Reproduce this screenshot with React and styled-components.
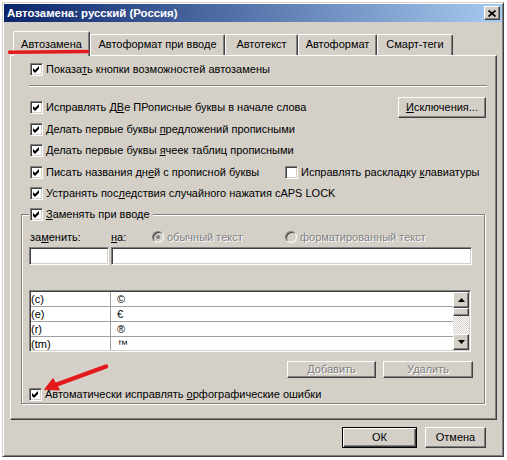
import React from 'react';
import styled, { createGlobalStyle, css } from 'styled-components';

const GlobalStyle = createGlobalStyle`
  html, body {
    margin: 0;
    padding: 0;
    background: #ffffff;
  }
  body {
    font-family: "Liberation Sans", Arial, sans-serif;
    font-size: 11px;
    line-height: 13px;
    color: #000;
  }
  u {
    text-decoration-thickness: 1px;
    text-underline-offset: 1px;
  }
`;

const raised = css`
  background: #d4d0c8;
  border: 1px solid;
  border-color: #ffffff #404040 #404040 #ffffff;
  box-shadow: inset -1px -1px #808080;
`;

const sunken = css`
  background: #ffffff;
  border: 1px solid;
  border-color: #808080 #ffffff #ffffff #808080;
  box-shadow: inset 1px 1px #404040, inset -1px -1px #d4d0c8;
`;

const Window = styled.div`
  position: relative;
  box-sizing: border-box;
  width: 502px;
  height: 455px;
  margin: 2px 0 0 2px;
  padding: 1px;
  display: flex;
  flex-direction: column;
  background: #d4d0c8;
  border: 1px solid;
  border-color: #d4d0c8 #404040 #404040 #d4d0c8;
  box-shadow: inset 1px 1px #ffffff, inset -1px -1px #808080;
`;

const TitleBar = styled.div`
  height: 18px;
  flex-shrink: 0;
  display: flex;
  align-items: center;
  justify-content: space-between;
  padding: 0 2px 0 3px;
  background: linear-gradient(to right, #0a246a, #a6caf0);
  color: #ffffff;
  font-size: 11.4px;
  font-weight: bold;
  white-space: nowrap;
`;

const CloseButton = styled.div`
  ${raised};
  box-sizing: border-box;
  width: 16px;
  height: 14px;
  display: flex;
  align-items: center;
  justify-content: center;
`;

const TabStrip = styled.div`
  position: relative;
  z-index: 1;
  flex-shrink: 0;
  display: flex;
  align-items: flex-end;
  height: 24px;
  margin-top: 9px;
  padding-left: 9px;
`;

const Tab = styled.div`
  box-sizing: border-box;
  width: ${(p) => p.$w}px;
  height: ${(p) => (p.$active ? 25 : 21)}px;
  margin-bottom: ${(p) => (p.$active ? -1 : 0)}px;
  padding-top: ${(p) => (p.$active ? 6 : 3)}px;
  text-align: center;
  white-space: nowrap;
  background: #d4d0c8;
  border-top: 1px solid #ffffff;
  border-left: 1px solid #ffffff;
  border-right: 1px solid #404040;
  box-shadow: inset -1px 0 #808080;
  border-radius: 2px 2px 0 0;
`;

const Panel = styled.div`
  box-sizing: border-box;
  flex-shrink: 0;
  height: 365px;
  margin: 0 5px 0 6px;
  padding: 3px 11px 0 10px;
  display: flex;
  flex-direction: column;
  border: 1px solid;
  border-color: #ffffff #404040 #404040 #ffffff;
  box-shadow: inset -1px -1px #808080;
`;

const CheckRow = styled.div`
  display: flex;
  align-items: center;
  height: ${(p) => p.$h || 21.5}px;
  margin-top: ${(p) => p.$mt || 0}px;
  padding-left: ${(p) => (p.$pl === undefined ? 9 : p.$pl)}px;
  white-space: nowrap;
`;

const Cell = styled.div`
  display: flex;
  align-items: center;
  width: ${(p) => (p.$w ? `${p.$w}px` : 'auto')};
  flex: ${(p) => (p.$w ? '0 0 auto' : '1 1 auto')};
`;

const Label = styled.span`
  margin-left: 3px;
  white-space: nowrap;
  color: ${(p) => (p.$disabled ? '#808080' : '#000000')};
  text-shadow: ${(p) => (p.$disabled ? '1px 1px #ffffff' : 'none')};
`;

const Separator = styled.div`
  height: 0;
  margin: 4.5px -2px 0 8px;
  border-top: 1px solid #808080;
  border-bottom: 1px solid #ffffff;
`;

const Button = styled.div`
  ${raised};
  box-sizing: border-box;
  display: flex;
  align-items: center;
  justify-content: center;
  flex-shrink: 0;
  width: ${(p) => p.$w}px;
  height: ${(p) => p.$h || 21}px;
  margin-right: ${(p) => p.$mr || 0}px;
  color: ${(p) => (p.$disabled ? '#808080' : '#000000')};
  text-shadow: ${(p) => (p.$disabled ? '1px 1px #ffffff' : 'none')};
  white-space: nowrap;
  ${(p) =>
    p.$default &&
    css`
      border: 1px solid #000000;
      box-shadow: inset 1px 1px #ffffff, inset -1px -1px #404040, inset -2px -2px #808080;
    `}
`;

const CheckBoxFrame = styled.span`
  ${sunken};
  box-sizing: border-box;
  flex-shrink: 0;
  width: 13px;
  height: 13px;
  display: inline-flex;
  align-items: center;
  justify-content: center;
`;

const GroupBox = styled.div`
  display: flex;
  flex-direction: column;
  margin-top: 9.5px;
  padding: 0 12px 2px 7px;
  border: 1px solid #808080;
  box-shadow: inset 1px 1px #ffffff, 1px 1px #ffffff;
`;

const Legend = styled.div`
  align-self: flex-start;
  display: flex;
  align-items: center;
  height: 15px;
  margin-top: -8px;
  padding: 0 3px 0 1px;
  background: #d4d0c8;
  white-space: nowrap;
`;

const FieldLabels = styled.div`
  display: flex;
  align-items: center;
  height: 13px;
  margin-top: 8.5px;
  padding-left: 1px;
`;

const FieldLabel = styled.div`
  display: flex;
  align-items: center;
  width: ${(p) => (p.$w ? `${p.$w}px` : 'auto')};
  flex-shrink: 0;
  white-space: nowrap;
`;

const RadioCircle = styled.span`
  box-sizing: border-box;
  flex-shrink: 0;
  width: 12px;
  height: 12px;
  border-radius: 50%;
  border: 1px solid;
  border-color: #808080 #ffffff #ffffff #808080;
  box-shadow: inset 1px 1px #404040;
  background: #d4d0c8;
  display: inline-flex;
  align-items: center;
  justify-content: center;
`;

const RadioDot = styled.span`
  width: 4px;
  height: 4px;
  border-radius: 50%;
  background: #808080;
`;

const InputsRow = styled.div`
  display: flex;
  margin-top: 3.5px;
`;

const TextInput = styled.div`
  ${sunken};
  box-sizing: border-box;
  height: 18px;
  width: ${(p) => (p.$w ? `${p.$w}px` : 'auto')};
  flex: ${(p) => (p.$w ? '0 0 auto' : '1 1 auto')};
  margin-left: ${(p) => p.$ml || 0}px;
`;

const ListBox = styled.div`
  ${sunken};
  box-sizing: border-box;
  display: flex;
  height: 62px;
  margin: 25px 1px 0 0;
  padding: 1px;
  overflow: hidden;
`;

const ListRows = styled.div`
  flex: 1 1 auto;
  overflow: hidden;
`;

const ListRow = styled.div`
  box-sizing: border-box;
  display: grid;
  grid-template-columns: 80px 1fr;
  height: 15px;
  line-height: 14px;
  border-bottom: 1px solid #a0a0a0;
`;

const ListCell = styled.div`
  padding-left: ${(p) => p.$pl}px;
  border-right: ${(p) => (p.$divider ? '1px solid #a0a0a0' : 'none')};
  white-space: nowrap;
  overflow: hidden;
`;

const ScrollBar = styled.div`
  display: flex;
  flex-direction: column;
  width: 16px;
  flex-shrink: 0;
`;

const ScrollButton = styled.div`
  ${raised};
  box-sizing: border-box;
  height: ${(p) => p.$h}px;
  flex-shrink: 0;
  display: flex;
  align-items: center;
  justify-content: center;
`;

const ScrollTrack = styled.div`
  flex: 1 1 auto;
  background: repeating-conic-gradient(#d4d0c8 0 25%, #ffffff 0 50%) 0 0 / 2px 2px;
`;

const ButtonsRow = styled.div`
  display: flex;
  justify-content: flex-end;
  gap: 7px;
  margin: 9px -1px 0 0;
`;

const Footer = styled.div`
  display: flex;
  justify-content: flex-end;
  gap: 8px;
  margin-top: 7px;
  padding-right: 16px;
`;

const Annotation = styled.svg`
  position: absolute;
  left: ${(p) => p.$x}px;
  top: ${(p) => p.$y}px;
  z-index: 5;
  pointer-events: none;
  overflow: visible;
`;

const CheckBox = ({ checked }) => (
  <CheckBoxFrame>
    {checked && (
      <svg width="9" height="9" viewBox="0 0 9 9">
        <polygon points="1,3 3,5 7,1 7,4 3,8 1,6" fill="#000" />
      </svg>
    )}
  </CheckBoxFrame>
);

const Radio = ({ checked }) => (
  <RadioCircle>{checked && <RadioDot />}</RadioCircle>
);

const Arrow = ({ down }) => (
  <svg width="7" height="4" viewBox="0 0 7 4">
    <polygon points={down ? '0,0 7,0 3.5,4' : '0,4 7,4 3.5,0'} fill="#000" />
  </svg>
);

const tabs = [
  { label: 'Автозамена', w: 77 },
  { label: 'Автоформат при вводе', w: 135 },
  { label: 'Автотекст', w: 73 },
  { label: 'Автоформат', w: 79 },
  { label: 'Смарт-теги', w: 76 },
];

const entries = [
  ['(c)', '©'],
  ['(e)', '€'],
  ['(r)', '®'],
  ['(tm)', '™'],
];

const App = () => (
  <>
    <GlobalStyle />
    <Window>
      <TitleBar>
        <span>Автозамена: русский (Россия)</span>
        <CloseButton>
          <svg width="8" height="7" viewBox="0 0 8 7">
            <path d="M0.5 0.5 L7.5 6.5 M7.5 0.5 L0.5 6.5" stroke="#000" strokeWidth="1.7" />
          </svg>
        </CloseButton>
      </TitleBar>

      <TabStrip>
        {tabs.map((t, i) => (
          <Tab key={t.label} $w={t.w} $active={i === 0}>
            {t.label}
          </Tab>
        ))}
      </TabStrip>

      <Panel>
        <CheckRow>
          <CheckBox checked />
          <Label>
            Показа<u>т</u>ь кнопки возможностей автозамены
          </Label>
        </CheckRow>
        <Separator />

        <CheckRow $mt={10}>
          <Cell>
            <CheckBox checked />
            <Label>
              Исправлять Д<u>В</u>е ПРописные буквы в начале слова
            </Label>
          </Cell>
          <Button $w={88} $mr={-1}>
            <span>
              <u>И</u>сключения...
            </span>
          </Button>
        </CheckRow>
        <CheckRow>
          <CheckBox checked />
          <Label>
            Делать первые буквы <u>п</u>редложений прописными
          </Label>
        </CheckRow>
        <CheckRow>
          <CheckBox checked />
          <Label>
            Делать первые буквы <u>я</u>чеек таблиц прописными
          </Label>
        </CheckRow>
        <CheckRow>
          <Cell $w={255}>
            <CheckBox checked />
            <Label>
              Писать названия дн<u>е</u>й с прописной буквы
            </Label>
          </Cell>
          <Cell>
            <CheckBox />
            <Label>
              Исправлять раскладку <u>к</u>лавиатуры
            </Label>
          </Cell>
        </CheckRow>
        <CheckRow>
          <CheckBox checked />
          <Label>
            Устранять пос<u>л</u>едствия случайного нажатия cAPS LOCK
          </Label>
        </CheckRow>

        <GroupBox>
          <Legend>
            <CheckBox checked />
            <Label>
              <u>З</u>аменять при вводе
            </Label>
          </Legend>

          <FieldLabels>
            <FieldLabel $w={81}>
              <span>
                за<u>м</u>енить:
              </span>
            </FieldLabel>
            <FieldLabel $w={41}>
              <span>
                <u>н</u>а:
              </span>
            </FieldLabel>
            <FieldLabel $w={133}>
              <Radio checked />
              <Label $disabled>обычный текст</Label>
            </FieldLabel>
            <FieldLabel>
              <Radio />
              <Label $disabled>форматированный текст</Label>
            </FieldLabel>
          </FieldLabels>

          <InputsRow>
            <TextInput $w={80} />
            <TextInput $ml={2} />
          </InputsRow>

          <ListBox>
            <ListRows>
              {entries.map(([from, to]) => (
                <ListRow key={from}>
                  <ListCell $pl={0} $divider>
                    {from}
                  </ListCell>
                  <ListCell $pl={6}>{to}</ListCell>
                </ListRow>
              ))}
            </ListRows>
            <ScrollBar>
              <ScrollButton $h={16}>
                <Arrow />
              </ScrollButton>
              <ScrollButton $h={8} />
              <ScrollTrack />
              <ScrollButton $h={16}>
                <Arrow down />
              </ScrollButton>
            </ScrollBar>
          </ListBox>

          <ButtonsRow>
            <Button $w={89} $h={17} $disabled>
              Добавить
            </Button>
            <Button $w={90} $h={17} $disabled>
              Удалить
            </Button>
          </ButtonsRow>

          <CheckRow $h={13} $mt={10} $pl={0}>
            <CheckBox checked />
            <Label>
              Автоматически исправлять <u>о</u>рфографические ошибки
            </Label>
          </CheckRow>
        </GroupBox>
      </Panel>

      <Footer>
        <Button $w={75} $default>
          ОК
        </Button>
        <Button $w={61}>Отмена</Button>
      </Footer>

      <Annotation $x={4} $y={46} width="84" height="7" viewBox="7 49 84 7">
        <path d="M9.5 52.2 L87.5 51.6" stroke="#e3191c" strokeWidth="3.5" strokeLinecap="round" />
      </Annotation>
      <Annotation $x={31} $y={359} width="78" height="34" viewBox="34 362 78 34">
        <path d="M106 366.5 L54 385.5" stroke="#e3191c" strokeWidth="4.5" strokeLinecap="round" />
        <polygon points="44.5,389.5 53,378.5 59.5,390" fill="#e3191c" stroke="#e3191c" strokeWidth="1" strokeLinejoin="round" />
      </Annotation>
    </Window>
  </>
);

export default App;
